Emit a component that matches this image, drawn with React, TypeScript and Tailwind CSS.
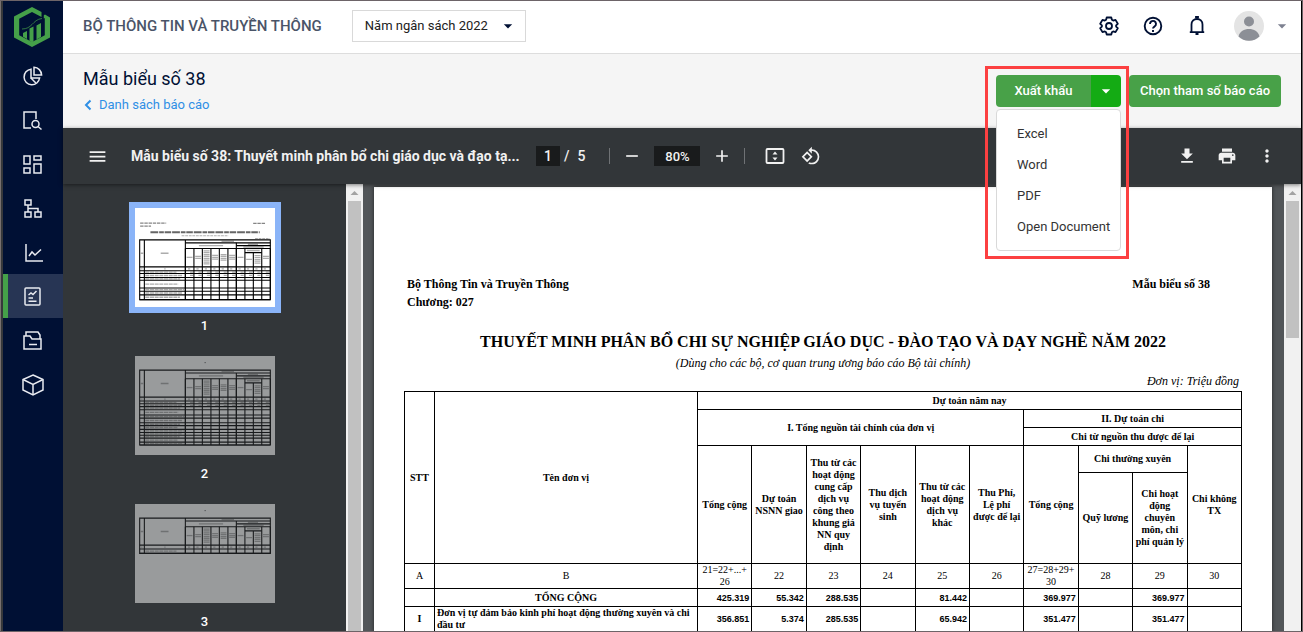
import { useState } from "react";
import { MdMenu, MdRemove, MdAdd, MdDownload, MdPrint, MdMoreVert, MdArrowDropDown, MdOutlineRotate90DegreesCcw } from "react-icons/md";

const navItems = [
  {
    label: "Tổng quan",
    icon: (
      <>
        <path d="M9 3.2A7.8 7.8 0 1 0 17.6 12H9z" />
        <path d="M12 1.2V9h7.6A8 8 0 0 0 12 1.2z" />
        <path d="M9 12l4.8 5" />
      </>
    ),
  },
  {
    label: "Tra cứu",
    icon: (
      <>
        <path d="M9 18H2V2h12v7" />
        <circle cx="13.5" cy="14" r="3.5" />
        <path d="M16 16.5l3.5 3" />
      </>
    ),
  },
  {
    label: "Danh mục",
    icon: (
      <>
        <path d="M2 2h6v8H2zM12 2h7v4h-7zM2 14h6v5H2zM12 10h7v9h-7z" />
      </>
    ),
  },
  {
    label: "Cơ cấu",
    icon: (
      <>
        <path d="M3 2h6v5H3zM3 14h6v5H3zM13 14h6v5h-6zM6 7v7M6 10.500h10V14" />
      </>
    ),
  },
  {
    label: "Phân tích",
    icon: (
      <>
        <path d="M4 2v17h17" />
        <path d="M7 14l3-4 3 3 6-5.500" />
      </>
    ),
  },
  {
    label: "Báo cáo",
    icon: (
      <>
        <rect x="3" y="2" width="15" height="17" rx="1" />
        <path d="M6.500 9l2.500-2 2 1.500L14.500 5M6.500 12h4.500M6.500 15.200h8" />
      </>
    ),
  },
  {
    label: "Hồ sơ",
    icon: (
      <>
        <path d="M4 6V2h12l2 3v4" />
        <path d="M2 6h6l2 3h9v10H2zM7 14.500h8" />
      </>
    ),
  },
  {
    label: "Tài sản",
    icon: (
      <>
        <path d="M11 1l10 4.500v10.500L11 21 1 16V5.500z" />
        <path d="M1 5.500l10 5 10-5M11 10.500V21" />
      </>
    ),
  },
];

const exportFormats = ["Excel", "Word", "PDF", "Open Document"];

const indexRow = ["A", "B", "21=22+...+ 26", "22", "23", "24", "25", "26", "27=28+29+ 30", "28", "29", "30"];

const totalRow = ["425.319", "55.342", "288.535", "", "81.442", "", "369.977", "", "369.977", ""];
const firstRow = ["356.851", "5.374", "285.535", "", "65.942", "", "351.477", "", "351.477", ""];

function Logo() {
  return (
    <svg viewBox="0 0 36 40" className="h-10 w-9" aria-hidden="true">
      <path d="M18 0l9.500 5v5L18 5 5.200 11.800v16.400L18 35l12.800-6.800V11l-1 .6V8.200L31 7.500l5 3V30.500L18 40 0 30.500V9.500z" fill="#45a049" />
      <path d="M9 26l4-2v8l-4-2.200zM15.500 21.500l4-2v15l-1.500.8-2.500-1.300zM22.500 18.500l4.500-2.500v14l-4.500 2.500z" fill="#45a049" />
      <path d="M8 22c5 0 7.500-2 10-4.500S23 12 28 11.500" fill="none" stroke="#45a049" strokeWidth=".7" />
    </svg>
  );
}

function ScrollBar({ thumb }: { thumb: string }) {
  return (
    <div className="flex w-[17px] shrink-0 flex-col items-center bg-[#f1f1f1]">
      <svg viewBox="0 0 17 17" className="h-[17px] w-[17px] shrink-0" aria-hidden="true">
        <path d="M4.500 11h8l-4-4z" fill="#a3a3a3" />
      </svg>
      <div className={`w-[13px] bg-[#c1c1c1] ${thumb}`} />
    </div>
  );
}

// Small preview of a page, drawn in the coordinates of the full size page
function Thumbnail({ tableTop, rows, heading }: { tableTop: number; rows: number[]; heading?: boolean }) {
  const cols = [323, 378, 432, 487, 541, 596, 650, 705, 759, 813, 868];
  const top = tableTop;
  const bottom = top + 198 + rows.reduce((sum, h) => sum + h, 0);
  let y = top + 198;
  const lines = rows.map((h) => (y += h));

  return (
    <svg viewBox="0 0 898 634" className="h-[99px] w-[140px] bg-white" aria-hidden="true">
      {heading ? (
        <g stroke="#333" fill="none">
          <path d="M33 97h167M33 115h70M758 98h80" strokeWidth="8" strokeDasharray="22 5" opacity=".6" />
          <path d="M99 155h701" strokeWidth="12" strokeDasharray="50 6 30 5 42 6" opacity=".75" />
          <path d="M299 177h300M770 195h95" strokeWidth="7" strokeDasharray="18 5" opacity=".4" />
        </g>
      ) : (
        <path d="M446 42h8" stroke="#555" strokeWidth="6" />
      )}
      <g stroke="#000" strokeWidth="7" fill="none">
        <path d={`M30 ${top}H868V${bottom}H30zM60 ${top}V${bottom}M323 ${top}V${bottom}`} />
        <path d={`M323 ${top + 19}H868M650 ${top + 37}H868M323 ${top + 55}H868M705 ${top + 82}H813M30 ${top + 173}H868M30 ${top + 198}H868`} />
        <path d={`M650 ${top + 19}V${bottom}`} />
        {cols.map((x) => (
          <path key={x} d={`M${x} ${top + (x === 759 ? 82 : 55)}V${bottom}`} />
        ))}
        {lines.map((line) => (
          <path key={line} d={`M30 ${line}H868`} />
        ))}
      </g>
      <g stroke="#333" fill="none" opacity=".4">
        <path d={`M37 ${top + 86}h16M165 ${top + 86}h50M555 ${top + 9}h80M410 ${top + 37}h155M724 ${top + 28}h65M695 ${top + 46}h130M718 ${top + 68}h82`} strokeWidth="9" />
        {cols.slice(0, 10).map((x, i) => {
          const lineCount = [1, 2, 8, 3, 4, 3, 1, 1, 5, 2][i];
          const middle = top + (i === 7 || i === 8 ? 127 : 114);
          return (
            <path
              key={x}
              d={`M${x + 27} ${middle - lineCount * 6}v${lineCount * 12}`}
              strokeWidth="38"
              strokeDasharray="8 4"
            />
          );
        })}
        <path d={`M40 ${top + 186}h8M188 ${top + 186}h8M340 ${top + 186}h520`} strokeWidth="9" strokeDasharray="14 40" />
        {lines.map((line, i) => (
          <path key={line} d={`M66 ${line - rows[i] / 2}h${200 + ((i * 37) % 50)}`} strokeWidth="9" strokeDasharray="26 4" />
        ))}
        {rows.length > 1 && <path d={`M353 ${top + 207}H860M353 ${top + 228}H860`} strokeWidth="8" strokeDasharray="20 34" />}
      </g>
    </svg>
  );
}

function Header() {
  return (
    <header className="flex h-[53px] shrink-0 items-center border-b border-[#dddddd] bg-white pb-[2px] pl-5 pr-[9px]">
      <h1 className="text-[15px] font-medium text-[#4a5468]">BỘ THÔNG TIN VÀ TRUYỀN THÔNG</h1>
      <div className="relative ml-[30px] flex items-center">
        <select
          aria-label="Năm ngân sách"
          className="h-8 w-[174px] appearance-none border border-[#d9d9d9] bg-white pl-3 text-[13px] text-[#212121]"
        >
          <option>Năm ngân sách 2022</option>
        </select>
        <MdArrowDropDown className="pointer-events-none absolute right-2 h-5 w-5 text-[#001034]" />
      </div>

      <div className="ml-auto flex items-center text-[#001034]">
        <button aria-label="Cài đặt" className="mr-6">
          <svg viewBox="0 0 20 20" className="h-5 w-5" fill="none" stroke="currentColor" strokeWidth="1.800" strokeLinejoin="round">
            <path d="M7.700 1.500h4.600l.6 2.300 1.300.8 2.300-.7 2.300 3.900-1.700 1.600v1.200l1.700 1.600-2.300 3.900-2.300-.7-1.300.8-.6 2.300H7.700l-.6-2.300-1.300-.8-2.300.7-2.300-3.900 1.700-1.600V9.400L1.200 7.800l2.300-3.900 2.300.7 1.300-.8z" />
            <circle cx="10" cy="10" r="3" />
          </svg>
        </button>
        <button aria-label="Trợ giúp" className="mr-6">
          <svg viewBox="0 0 20 20" className="h-5 w-5" fill="none" stroke="currentColor" strokeWidth="1.900">
            <circle cx="10" cy="10" r="8.300" />
            <path d="M7 8a3 3 0 1 1 4.800 2.300C10.700 11 10 11.400 10 12.600M10 14v2" />
          </svg>
        </button>
        <button aria-label="Thông báo" className="mr-[27px]">
          <svg viewBox="0 0 20 20" className="h-5 w-5" fill="none" stroke="currentColor" strokeWidth="1.800">
            <path d="M4.500 16V8.500C4.500 5 7 3 10 3s5.500 2 5.500 5.500V16M2.800 16.200h14.400" />
            <path d="M9 2.500V1h2v1.500M8.500 18h3" />
          </svg>
        </button>
        <button aria-label="Tài khoản" className="flex items-center gap-2">
          <svg viewBox="0 0 30 30" className="h-[30px] w-[30px]">
            <circle cx="15" cy="15" r="15" fill="#e4e4e4" />
            <circle cx="15" cy="10.500" r="5" fill="#8c8f96" />
            <path d="M4.500 25.500C6 20 10 18 15 18s9 2 10.500 7.500A15 15 0 0 1 4.500 25.500z" fill="#8c8f96" />
          </svg>
          <MdArrowDropDown className="h-5 w-5 text-[#7d8190]" />
        </button>
      </div>
    </header>
  );
}

function ExportMenu() {
  const [open, setOpen] = useState(true);

  return (
    <div className="relative z-20">
      <div className="flex h-8 overflow-hidden rounded text-[13px] font-medium text-white">
        <button className="w-[95px] bg-[#48a148]">Xuất khẩu</button>
        <button
          aria-label="Chọn định dạng"
          onClick={() => setOpen(!open)}
          className="flex w-[30px] items-center justify-center bg-[#14ab14]"
        >
          <MdArrowDropDown className="h-5 w-5" />
        </button>
      </div>
      {open && (
        <ul className="absolute left-0 right-0 top-[34px] rounded border border-[#d9d9d9] bg-white pb-2 pt-2 text-[13px] text-[#333333]">
          {exportFormats.map((format) => (
            <li key={format}>
              <button className="h-[31px] whitespace-nowrap pl-5 text-left">{format}</button>
            </li>
          ))}
        </ul>
      )}
      <div className="pointer-events-none absolute -left-[11px] -right-2 -top-[9px] h-[193px] border-3 border-[#fc4041]" />
    </div>
  );
}

function ViewerToolbar() {
  return (
    <div className="relative z-10 flex h-14 shrink-0 items-center bg-[#323639] pl-6 pr-6 text-[#f1f1f1] shadow-[0_1px_4px_rgba(0,0,0,0.5)]">
      <button aria-label="Menu" className="mr-[23px]">
        <MdMenu className="h-[21px] w-[21px]" />
      </button>
      <h3 className="w-[405px] text-sm font-bold whitespace-nowrap">Mẫu biểu số 38: Thuyết minh phân bổ chi giáo dục và đạo tạ...</h3>
      <div className="flex items-center text-sm font-medium">
        <input aria-label="Trang" defaultValue="1" className="h-5 w-6 bg-[#191b1c] text-center" />
        <span className="ml-1">/</span>
        <span className="ml-2">5</span>
      </div>
      <div className="ml-6 h-4 w-px bg-[#6f7275]" />
      <button aria-label="Thu nhỏ" className="ml-3">
        <MdRemove className="h-5 w-5" />
      </button>
      <input aria-label="Thu phóng" defaultValue="80%" className="ml-3 h-5 w-[46px] bg-[#191b1c] text-center text-[13px] font-medium" />
      <button aria-label="Phóng to" className="ml-3">
        <MdAdd className="h-5 w-5" />
      </button>
      <div className="ml-3 h-4 w-px bg-[#6f7275]" />
      <button aria-label="Vừa với trang" className="ml-5">
        <svg viewBox="0 0 20 20" className="h-5 w-5">
          <rect x="1.500" y="3" width="17" height="14" rx="1" fill="none" stroke="currentColor" strokeWidth="1.800" />
          <path d="M7.500 8.500L10 5.500l2.500 3zM7.500 11.500l2.500 3 2.500-3z" fill="currentColor" />
        </svg>
      </button>
      <button aria-label="Xoay" className="ml-4">
        <MdOutlineRotate90DegreesCcw className="h-5 w-5" />
      </button>
      <div className="ml-auto flex items-center gap-5">
        <button aria-label="Tải xuống">
          <MdDownload className="h-5 w-5" />
        </button>
        <button aria-label="In">
          <MdPrint className="h-5 w-5" />
        </button>
        <button aria-label="Thêm">
          <MdMoreVert className="h-5 w-5" />
        </button>
      </div>
    </div>
  );
}

function AmountCells({ values }: { values: string[] }) {
  return (
    <>
      {values.map((value, index) => (
        <td key={index} className="border border-black pr-[2px] text-right font-['Liberation_Sans_Narrow','Liberation_Sans',sans-serif] text-[9px] font-bold">
          {value}
        </td>
      ))}
    </>
  );
}

function ReportTable() {
  const th = "border border-black px-[2px]";

  return (
    <table className="w-full table-fixed border-collapse text-center text-[10px] leading-3">
      <colgroup>
        <col className="w-[30px]" />
        <col className="w-[263px]" />
        <col span={10} />
      </colgroup>
      <thead>
        <tr className="h-[18px]">
          <th rowSpan={5} className={th}>STT</th>
          <th rowSpan={5} className={th}>Tên đơn vị</th>
          <th colSpan={10} className={th}>Dự toán năm nay</th>
        </tr>
        <tr className="h-[18px]">
          <th colSpan={6} rowSpan={2} className={th}>I. Tổng nguồn tài chính của đơn vị</th>
          <th colSpan={4} className={th}>II. Dự toán chi</th>
        </tr>
        <tr className="h-[18px]">
          <th colSpan={4} className={th}>Chi từ nguồn thu được để lại</th>
        </tr>
        <tr className="h-[27px]">
          <th rowSpan={2} className={th}>Tổng cộng</th>
          <th rowSpan={2} className={th}>Dự toán NSNN giao</th>
          <th rowSpan={2} className={th}>Thu từ các hoạt động cung cấp dịch vụ công theo khung giá NN quy định</th>
          <th rowSpan={2} className={th}>Thu dịch vụ tuyển sinh</th>
          <th rowSpan={2} className={th}>Thu từ các hoạt động dịch vụ khác</th>
          <th rowSpan={2} className={th}>Thu Phí, Lệ phí được để lại</th>
          <th rowSpan={2} className={th}>Tổng cộng</th>
          <th colSpan={2} className={th}>Chi thường xuyên</th>
          <th rowSpan={2} className={th}>Chi không TX</th>
        </tr>
        <tr className="h-[91px]">
          <th className={th}>Quỹ lương</th>
          <th className={th}>Chi hoạt động chuyên môn, chi phí quản lý</th>
        </tr>
      </thead>
      <tbody>
        <tr className="h-[25px]">
          {indexRow.map((value) => (
            <td key={value} className="border border-black">{value}</td>
          ))}
        </tr>
        <tr className="h-[18px]">
          <td className="border border-black" />
          <td className="border border-black font-bold">TỔNG CỘNG</td>
          <AmountCells values={totalRow} />
        </tr>
        <tr className="h-[25px]">
          <td className="border border-black font-bold">I</td>
          <td className="border border-black px-[2px] text-left font-bold">
            Đơn vị tự đảm bảo kinh phí hoạt động thường xuyên và chi đầu tư
          </td>
          <AmountCells values={firstRow} />
        </tr>
      </tbody>
    </table>
  );
}

export default function App() {
  return (
    <div className="flex h-screen overflow-hidden border-y border-r border-[#6d6468] font-[Roboto,sans-serif]">
      <div className="w-[3px] shrink-0 border-l border-[#77706f] bg-[#36383b]" />
      <nav className="flex w-[60px] shrink-0 flex-col bg-[#001034]">
        <a href="#" aria-label="Trang chủ" className="flex h-[53px] items-center justify-center pb-[2px] pr-[3px]">
          <Logo />
        </a>
        {navItems.map((item) => (
          <a
            key={item.label}
            href="#"
            aria-label={item.label}
            className={`flex h-11 items-center justify-center border-l-[5px] pr-[5px] pt-[2px] text-[#e8eaf0] ${
              item.label === "Báo cáo" ? "border-[#45a049] bg-[#273554]" : "border-transparent"
            }`}
          >
            <svg viewBox="0 0 22 22" className="h-[22px] w-[22px]" fill="none" stroke="currentColor" strokeWidth="1.500">
              {item.icon}
            </svg>
          </a>
        ))}
      </nav>

      <div className="flex min-w-0 flex-1 flex-col border-r border-black">
        <Header />

        <div className="flex h-[74px] shrink-0 items-start justify-between bg-[#f5f5f5] pl-5 pr-5">
          <div className="pt-[13px]">
            <h2 className="text-lg leading-6 text-[#001034]">Mẫu biểu số 38</h2>
            <a href="#" className="mt-1 flex items-center gap-[7px] text-[13px] leading-5 text-[#2f8fe5]">
              <svg viewBox="0 0 9 12" className="h-3 w-[9px]" fill="none" stroke="currentColor" strokeWidth="2" aria-hidden="true">
                <path d="M7.500 1.500L3 6l4.500 4.500" />
              </svg>
              Danh sách báo cáo
            </a>
          </div>
          <div className="flex gap-2 pt-[21px]">
            <ExportMenu />
            <button className="h-8 w-[152px] rounded bg-[#48a148] text-[13px] font-medium text-white">Chọn tham số báo cáo</button>
          </div>
        </div>

        <ViewerToolbar />

        <div className="flex min-h-0 flex-1 bg-[#525659]">
          <aside className="flex w-[283px] shrink-0 flex-col items-center overflow-hidden bg-[#323639] pt-[18px] text-[13px] font-medium leading-5 text-white">
            <button className="flex flex-col items-center">
              <span className="border-6 border-[#8ab4f8]">
                <Thumbnail
                  heading
                  tableTop={204}
                  rows={[18, 25, 18, 50, 20, 24, 30]}
                />
              </span>
              <span className="mt-[3px]">1</span>
            </button>
            <button className="mt-5 flex flex-col items-center">
              <span className="opacity-50">
                <Thumbnail tableTop={90} rows={[18, 18, 20, 34, 20, 30, 18, 24, 20, 18, 18, 26, 18]} />
              </span>
              <span className="mt-[9px]">2</span>
            </button>
            <button className="mt-5 flex flex-col items-center">
              <span className="opacity-50">
                <Thumbnail tableTop={90} rows={[28]} />
              </span>
              <span className="mt-[9px]">3</span>
            </button>
          </aside>
          <ScrollBar thumb="flex-1" />

          <main className="min-w-0 flex-1 overflow-hidden pl-[11px] pr-3 pt-[3px]">
            <article className="min-h-full bg-white px-[30px] pt-[88px] font-['Liberation_Serif',serif] text-black shadow-[0_0_4px_rgba(0,0,0,0.6)]">
              <div className="flex justify-between pl-[3px] pr-8 text-xs font-bold leading-[18px]">
                <div>
                  <p>Bộ Thông Tin và Truyền Thông</p>
                  <p>Chương: 027</p>
                </div>
                <p>Mẫu biểu số 38</p>
              </div>
              <h4 className="mt-[19px] text-center text-base font-bold leading-6 whitespace-nowrap">
                THUYẾT MINH PHÂN BỔ CHI SỰ NGHIỆP GIÁO DỤC - ĐÀO TẠO VÀ DẠY NGHỀ NĂM 2022
              </h4>
              <p className="text-center text-xs italic leading-[18px]">(Dùng cho các bộ, cơ quan trung ương báo cáo Bộ tài chính)</p>
              <p className="pr-[3px] text-right text-xs italic leading-[19px]">Đơn vị: Triệu đồng</p>
              <ReportTable />
            </article>
          </main>
          <ScrollBar thumb="h-[137px]" />
        </div>
      </div>
    </div>
  );
}
